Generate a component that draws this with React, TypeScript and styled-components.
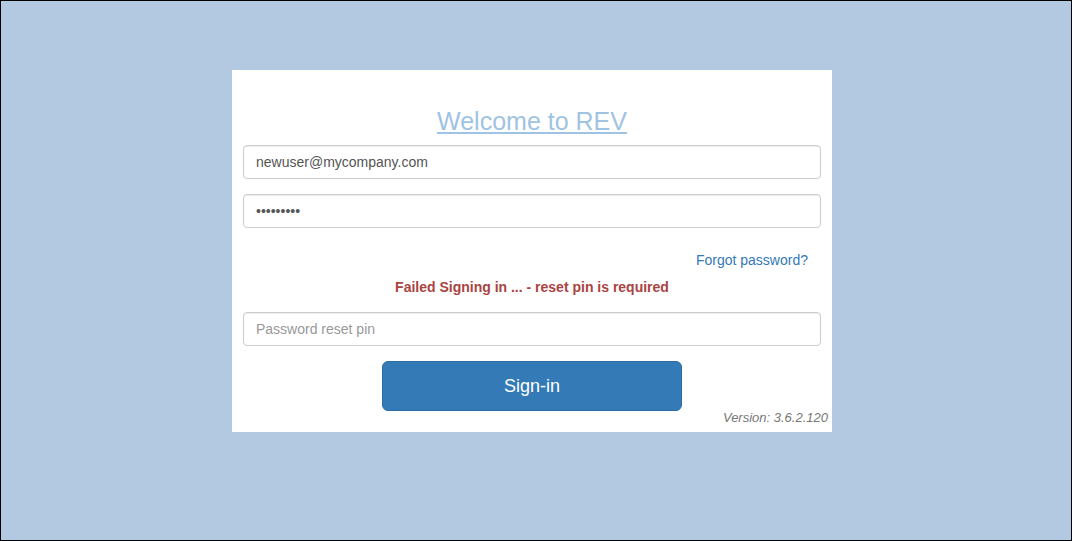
import React from 'react';
import styled, { createGlobalStyle } from 'styled-components';

const GlobalStyle = createGlobalStyle`
	html, body {
		margin: 0;
		padding: 0;
	}
	body {
		font-family: 'Liberation Sans', Arial, sans-serif;
	}
`;

const App: React.FC = () => {
	return (
		<Page>
			<GlobalStyle />
			<LoginCard>
				<Title href="#">Welcome to REV</Title>
				<Field type="text" defaultValue="newuser@mycompany.com" />
				<Field type="text" defaultValue="•••••••••" />
				<ForgotRow>
					<ForgotLink href="#">Forgot password?</ForgotLink>
				</ForgotRow>
				<ErrorText>Failed Signing in ... - reset pin is required</ErrorText>
				<Field type="text" placeholder="Password reset pin" />
				<ButtonRow>
					<SignInButton type="button">Sign-in</SignInButton>
				</ButtonRow>
				<Version>Version: 3.6.2.120</Version>
			</LoginCard>
		</Page>
	);
};

const Page = styled.div`
	box-sizing: border-box;
	width: 1072px;
	height: 541px;
	border: 1px solid #000;
	background: #b3c9e1;
	display: flex;
	align-items: flex-start;
	padding: 69px 0 0 231px;
`;

const LoginCard = styled.div`
	box-sizing: border-box;
	width: 600px;
	background: #fff;
	display: flex;
	flex-direction: column;
	padding: 37px 11px 6px;
`;

const Title = styled.a`
	align-self: center;
	font-size: 25px;
	line-height: 28px;
	color: #9fc3e2;
	text-decoration: underline;
	text-underline-offset: 2px;
	margin-bottom: 10px;
`;

const Field = styled.input`
	box-sizing: border-box;
	width: 100%;
	height: 34px;
	padding: 6px 12px;
	font-family: 'Liberation Sans', Arial, sans-serif;
	font-size: 14px;
	color: #555;
	background: #fff;
	border: 1px solid #ccc;
	border-radius: 4px;
	box-shadow: inset 0 1px 1px rgba(0, 0, 0, 0.075);
	outline: none;
	margin-bottom: 15px;

	&::placeholder {
		color: #999;
	}
`;

const ForgotRow = styled.div`
	display: flex;
	justify-content: flex-end;
	padding-right: 13px;
	margin-top: 7px;
	line-height: 20px;
`;

const ForgotLink = styled.a`
	font-size: 14px;
	color: #337ab7;
	text-decoration: none;
`;

const ErrorText = styled.div`
	text-align: center;
	font-size: 14px;
	line-height: 20px;
	font-weight: bold;
	color: #a94442;
	margin: 7px 0 15px;
`;

const ButtonRow = styled.div`
	display: flex;
	justify-content: center;
`;

const SignInButton = styled.button`
	width: 300px;
	height: 50px;
	background: #337ab7;
	border: 1px solid #2e6da4;
	border-radius: 6px;
	color: #fff;
	font-family: 'Liberation Sans', Arial, sans-serif;
	font-size: 18px;
	cursor: pointer;
`;

const Version = styled.div`
	text-align: right;
	font-size: 13px;
	line-height: 16px;
	font-style: italic;
	color: #777;
	margin-top: -1px;
	margin-right: -7px;
`;

export default App;
